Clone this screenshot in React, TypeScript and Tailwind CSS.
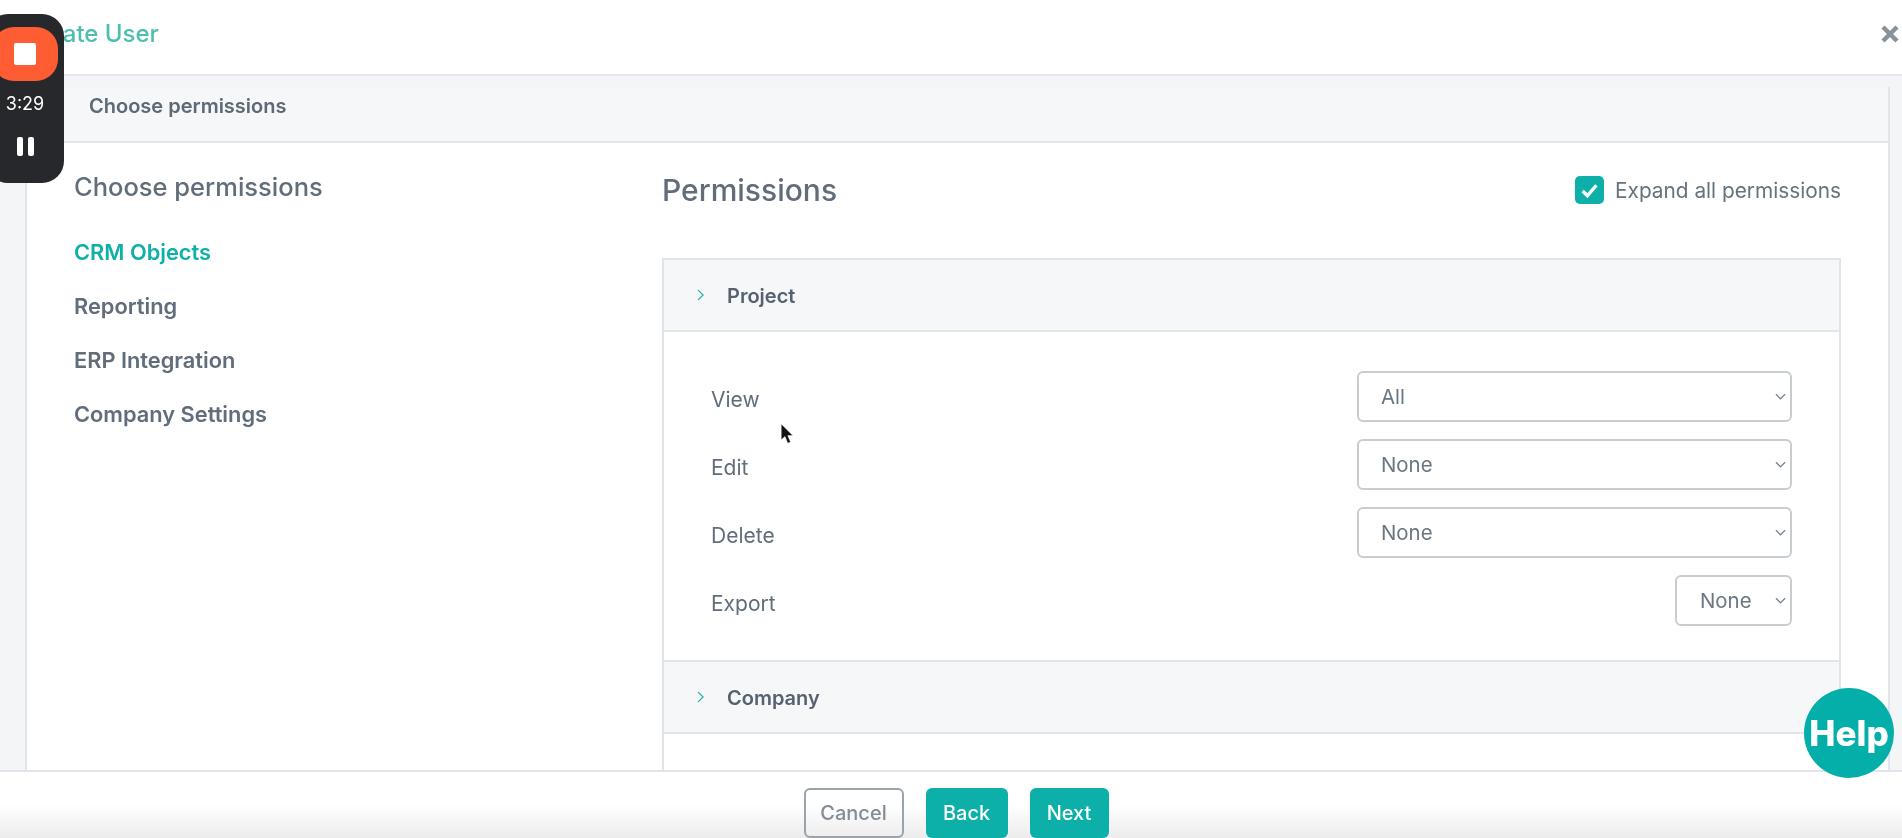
import React from "react";

const rows = [
  { label: "View", value: "All" },
  { label: "Edit", value: "None" },
  { label: "Delete", value: "None" },
  { label: "Export", value: "None", small: true },
];

const menu = ["Reporting", "ERP Integration", "Company Settings"];

function Chevron({ className }: { className: string }) {
  return (
    <svg viewBox="0 0 12 12" fill="none" stroke="currentColor" strokeWidth="1.3" className={className}>
      <path d="M1 3.5 6 8.5 11 3.5" />
    </svg>
  );
}

function SectionHead({ title }: { title: string }) {
  return (
    <div className="flex h-[70px] items-center bg-[#f5f7f9] pl-[33px]">
      <svg viewBox="0 0 8 14" fill="none" stroke="currentColor" strokeWidth="1.5" className="h-[12px] w-[7px] text-[#2fb3ab]">
        <path d="M1 1l6 6-6 6" />
      </svg>
      <span className="ml-[23px] pt-[2px] text-[20px] font-semibold text-[#56626f]">{title}</span>
    </div>
  );
}

export default function App() {
  return (
    <div className="relative flex h-[838px] w-[1902px] flex-col overflow-hidden bg-white font-['Inter',sans-serif] text-[#616d7a] blur-[0.4px]">
      <header className="flex h-[76px] shrink-0 items-center justify-between border-b-2 border-[#e4e8ec] pb-[7px] pl-[22px] pr-[3px]">
        <h1 className="text-[24px] font-medium text-[#4dbfae]">Create User</h1>
        <svg viewBox="0 0 18 18" stroke="#8a9298" strokeWidth="4.5" className="h-[18px] w-[18px]">
          <path d="M2 2l14 14M16 2 2 16" />
        </svg>
      </header>

      <main className="flex min-h-0 flex-1 flex-col overflow-hidden bg-[#f3f5f7] pl-[25px] pr-[12px] pt-[11px]">
        <div className="flex min-h-0 flex-1 flex-col border-x-2 border-[#dfe5eb] bg-white">
          <div className="flex h-[56px] shrink-0 items-center border-b-2 border-[#e1e6ec] bg-[#f5f7f9] pb-[16px] pl-[62px] text-[20px] font-semibold text-[#5d6975]">
            Choose permissions
          </div>
          <div className="flex min-h-0 flex-1 overflow-hidden">
            <aside className="w-[635px] shrink-0 pl-[47px] pt-[29px]">
              <h2 className="text-[25.5px] font-medium leading-[30px] text-[#616d7a]">Choose permissions</h2>
              <nav className="mt-[23px] text-[21.8px] font-semibold">
                <div className="flex h-[54px] items-center text-[#0fb0a8]">CRM Objects</div>
                {menu.map((item) => (
                  <div key={item} className="flex h-[54px] items-center text-[#616d7a]">{item}</div>
                ))}
              </nav>
            </aside>

            <section className="min-w-0 flex-1 pr-[47px] pt-[33px]">
              <div className="flex h-[28px] items-center justify-between">
                <h2 className="text-[30px] font-medium text-[#616d7a]">Permissions</h2>
                <label className="flex items-center gap-[11px] text-[20.8px] text-[#66727e]">
                  <span className="flex h-[28px] w-[29px] items-center justify-center rounded-[5px] bg-[#0cb0a9]">
                    <svg viewBox="0 0 20 20" fill="none" stroke="#fff" strokeWidth="3.2" className="h-[21px] w-[21px]">
                      <path d="M3.5 10.5 8 15 16.5 5" />
                    </svg>
                  </span>
                  <span className="pt-[2px]">Expand all permissions</span>
                </label>
              </div>

              <div className="mt-[54px] border-x-2 border-t-2 border-[#dfe5eb]">
                <div className="border-b-2 border-[#e1e6ec]">
                  <SectionHead title="Project" />
                </div>
                <div className="flex flex-col gap-[17px] pb-[34px] pl-[47px] pr-[47px] pt-[39px]">
                  {rows.map((r) => (
                    <div key={r.label} className="flex h-[51px] items-center justify-between">
                      <span className="pt-[7px] text-[21px] text-[#616d7a]">{r.label}</span>
                      <div className={`flex h-[51px] items-center justify-between rounded-[6px] border-2 border-[#c8cdd1] pr-[4px] text-[20.4px] text-[#6b7682] ${r.small ? "w-[117px] pl-[23px]" : "w-[435px] pl-[22px]"}`}>
                        <span className="pt-[2px]">{r.value}</span>
                        <Chevron className="h-[11px] w-[11px] text-[#77828d]" />
                      </div>
                    </div>
                  ))}
                </div>
                <div className="border-y-2 border-[#dfe5eb]">
                  <SectionHead title="Company" />
                </div>
                <div className="h-[60px]" />
              </div>
            </section>
          </div>
        </div>
      </main>

      <footer className="flex h-[68px] shrink-0 justify-center gap-[22px] border-t-2 border-[#e1e5e9] bg-gradient-to-b from-white from-50% to-[#ececec] pl-[10px] pt-[16px] text-[20px] font-medium">
        <button className="h-[50px] w-[100px] rounded-[6px] border-2 border-[#9aa3aa] text-[#848c94]">Cancel</button>
        <div className="flex gap-[22px] text-white">
          <button className="h-[50px] w-[82px] rounded-[6px] bg-[#0cb0a9]">Back</button>
          <button className="h-[50px] w-[79px] rounded-[6px] bg-[#0cb0a9]">Next</button>
        </div>
      </footer>

      {/* recorder widget */}
      <div className="absolute left-[-14px] top-[14px] flex h-[169px] w-[78px] flex-col items-center rounded-[22px] bg-[#26282c] pt-[13px] text-white">
        <div className="flex h-[54px] w-[66px] items-center justify-center rounded-[22px] bg-[#fe5c33]">
          <div className="h-[22px] w-[22px] rounded-[2px] bg-white" />
        </div>
        <span className="mt-[12px] text-[18px] leading-[22px]">3:29</span>
        <div className="mt-[22px] flex gap-[5px]">
          <span className="h-[19px] w-[6px] rounded-[2px] bg-white" />
          <span className="h-[19px] w-[6px] rounded-[2px] bg-white" />
        </div>
      </div>

      <div className="absolute left-[1804px] top-[688px] flex h-[90px] w-[90px] items-center justify-center whitespace-nowrap rounded-full bg-[#05afa9] text-[35px] font-extrabold text-white">
        Help
      </div>

      <svg viewBox="0 0 12 19" className="absolute left-[780px] top-[424px] h-[20px] w-[13px]">
        <path d="M1 0v15l3.6-3.2 2.6 6.4 2.6-1-2.6-6.2H12z" fill="#111" stroke="#fff" strokeWidth="0.4" />
      </svg>
    </div>
  );
}
